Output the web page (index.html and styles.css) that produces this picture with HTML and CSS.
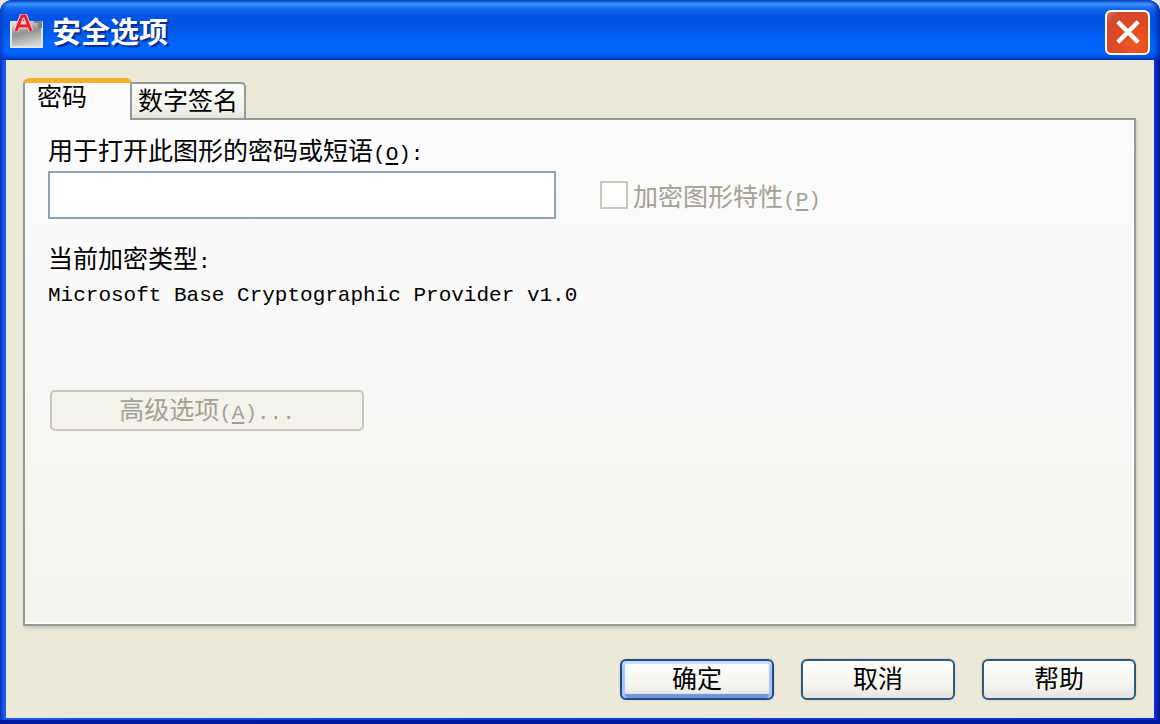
FILE: index.html
```html
<!DOCTYPE html>
<html lang="zh-CN">
<head>
<meta charset="utf-8">
<title>安全选项</title>
<link rel="stylesheet" href="styles.css">
</head>
<body>
<div class="window">
  <header class="titlebar">
    <svg class="app-icon" viewBox="0 0 36 36" aria-hidden="true">
      <defs>
        <linearGradient id="plate" x1="0" y1="0" x2="0.3" y2="1">
          <stop offset="0" stop-color="#efefef"/>
          <stop offset="0.5" stop-color="#8f9290"/>
          <stop offset="1" stop-color="#d4d5d4"/>
        </linearGradient>
      </defs>
      <rect x="1" y="7" width="33" height="27" fill="url(#plate)"/>
      <path d="M2 7V33H33V8" fill="none" stroke="#e4e6ea" stroke-width="2"/>
      <path d="M25 7H33V14H29V9H25Z" fill="#7d8186"/>
      <path d="M7 17L13 2H16L22 17M9 12H20" fill="none" stroke="#ffc9cc" stroke-width="5"/>
      <path d="M7 17L13 2H16L22 17M9 12H20" fill="none" stroke="#ea1f2a" stroke-width="3"/>
    </svg>
    <h1 class="title">安全选项</h1>
    <button class="close" type="button" aria-label="关闭">
      <svg class="close-icon" viewBox="0 0 24 24" aria-hidden="true">
        <path d="M4 4L20 20M20 4L4 20" fill="none" stroke="#fff" stroke-width="4" stroke-linecap="square"/>
      </svg>
    </button>
  </header>
  <main class="body">
    <div class="tabs" role="tablist">
      <button class="tab tab-active" type="button" role="tab" aria-selected="true">密码</button>
      <button class="tab" type="button" role="tab" aria-selected="false">数字签名</button>
    </div>
    <section class="panel" role="tabpanel">
      <label class="label" for="phrase">用于打开此图形的密码或短语<span class="key">(<u>O</u>):</span></label>
      <div class="row">
        <input class="field" id="phrase" type="text">
        <div class="option">
          <input class="check" id="encrypt" type="checkbox" disabled>
          <label class="label disabled" for="encrypt">加密图形特性<span class="key">(<u>P</u>)</span></label>
        </div>
      </div>
      <p class="label current">当前加密类型<span class="key">:</span></p>
      <p class="label provider"><span class="key">Microsoft Base Cryptographic Provider v1.0</span></p>
      <button class="advanced" type="button" disabled>高级选项<span class="key">(<u>A</u>)...</span></button>
    </section>
    <footer class="actions">
      <button class="action action-default" type="button">确定</button>
      <button class="action" type="button">取消</button>
      <button class="action" type="button">帮助</button>
    </footer>
  </main>
</div>
</body>
</html>
```
FILE: styles.css
```css
* {
  box-sizing: border-box;
}

body {
  margin: 0;
  background: #e9e6dc;
  color: #000;
  font-family: "Noto Sans CJK SC", sans-serif;
  font-size: 25px;
}

button,
input {
  font: inherit;
  color: inherit;
}

.window {
  display: flex;
  flex-direction: column;
  min-height: 100vh;
  padding: 0 6px 6px;
  border-radius: 12px 12px 0 0;
  background: linear-gradient(90deg, #0a30c0, #1c5be8 4px, #1c5be8 6px, #0b3fd0 50%, #0a2ed0 calc(100% - 5px), #00138c);
  box-shadow: inset 0 -4px 1px #0018a0;
  overflow: hidden;
}

.titlebar {
  display: flex;
  align-items: center;
  height: 60px;
  margin: 0 -6px;
  padding: 4px 10px 0 9px;
  border-radius: 12px 12px 0 0;
  background: linear-gradient(#0a4ac8, #3d95ff 4px, #1264ee 9px, #0054e3 16px, #0055e5 28px, #0065fb 42px, #0066ff 52px, #0050e0 57px, #0038c4);
  box-shadow: inset 4px 0 4px -2px #0838b8, inset -5px 0 5px -2px #0028a8;
}

.app-icon {
  width: 36px;
  height: 36px;
}

.title {
  flex: 1;
  margin: 0 0 4px 7px;
  color: #fff;
  font-size: 29px;
  line-height: 40px;
  font-weight: 700;
  text-shadow: 2px 2px 1px #0a2a90;
}

.close {
  display: grid;
  place-items: center;
  width: 45px;
  height: 45px;
  padding: 0;
  border: 2px solid #fff;
  border-radius: 6px;
  background: radial-gradient(circle at 70% 75%, #ee5a20, #e04a24 45%, #cf4a32 80%, #dc7a68);
}

.close-icon {
  width: 26px;
  height: 26px;
}

.body {
  flex: 1;
  display: flex;
  flex-direction: column;
  padding: 18px 18px 18px 17px;
  background: #ece9d8;
  box-shadow: inset 0 0 0 1px #dfeaf8;
}

.tabs {
  display: flex;
  align-items: flex-end;
}

.tab {
  height: 36px;
  padding: 0 6px 4px;
  border: 2px solid #919b9c;
  border-bottom: 0;
  border-left-width: 0;
  border-radius: 0 5px 0 0;
  background: linear-gradient(#fff, #f0f0ea 80%, #e4e4dc);
  line-height: 30px;
}

.tab-active {
  position: relative;
  width: 109px;
  height: 42px;
  margin-bottom: -2px;
  padding: 0 12px 13px;
  border-left-width: 2px;
  border-top: 5px solid #f5b02e;
  border-radius: 6px 6px 0 0;
  background: #fcfcfe;
  line-height: 24px;
  text-align: left;
}

.panel {
  flex: 1;
  display: flex;
  flex-direction: column;
  align-items: flex-start;
  padding: 14px 23px;
  border: 2px solid #919b9c;
  background: linear-gradient(#fcfcfe, #f4f3ee);
  box-shadow: 1px 2px 3px #c8c5b4, inset -2px -2px 0 #fff;
}

.label {
  margin: 0;
  line-height: 31px;
}

.key {
  font-family: "Liberation Mono", monospace;
  font-size: 21px;
  line-height: 1;
}

u {
  text-underline-offset: 3px;
}

.row {
  display: flex;
  align-items: center;
  gap: 44px;
  width: 100%;
  margin-top: 6px;
}

.field {
  width: 508px;
  height: 48px;
  padding: 0 8px;
  border: 2px solid #8aa4b8;
  background: #fff;
}

.option {
  display: flex;
  align-items: center;
  gap: 5px;
}

.check {
  appearance: none;
  width: 28px;
  height: 28px;
  margin: 0;
  border: 2px solid #cac8bb;
  background: #fff;
}

.disabled {
  color: #a3a193;
}

.current {
  margin-top: 23px;
}

.provider {
  line-height: 35px;
}

.advanced {
  width: 314px;
  height: 41px;
  margin: 82px 0 0 2px;
  padding: 0 0 4px;
  border: 2px solid #c9c7ba;
  border-radius: 5px;
  background: #f4f3e9;
  color: #a3a193;
  line-height: 33px;
}

.actions {
  display: flex;
  justify-content: flex-end;
  gap: 27px;
  margin-top: 33px;
}

.action {
  width: 154px;
  height: 41px;
  padding: 0 0 4px;
  border: 2px solid #31597f;
  border-radius: 6px;
  background: linear-gradient(#fff, #f3f3ee 70%, #e4e3dc);
  box-shadow: 0 0 2px #a9c0c8;
  line-height: 31px;
}

.action-default {
  border-color: #1f4a86;
  box-shadow: inset 0 3px 1px #c2d8fc, inset 3px 0 1px #a8c4f8, inset -3px 0 1px #a8c4f8, inset 0 -4px 1px #7090e0, 0 0 2px #a9c0c8;
}
```
